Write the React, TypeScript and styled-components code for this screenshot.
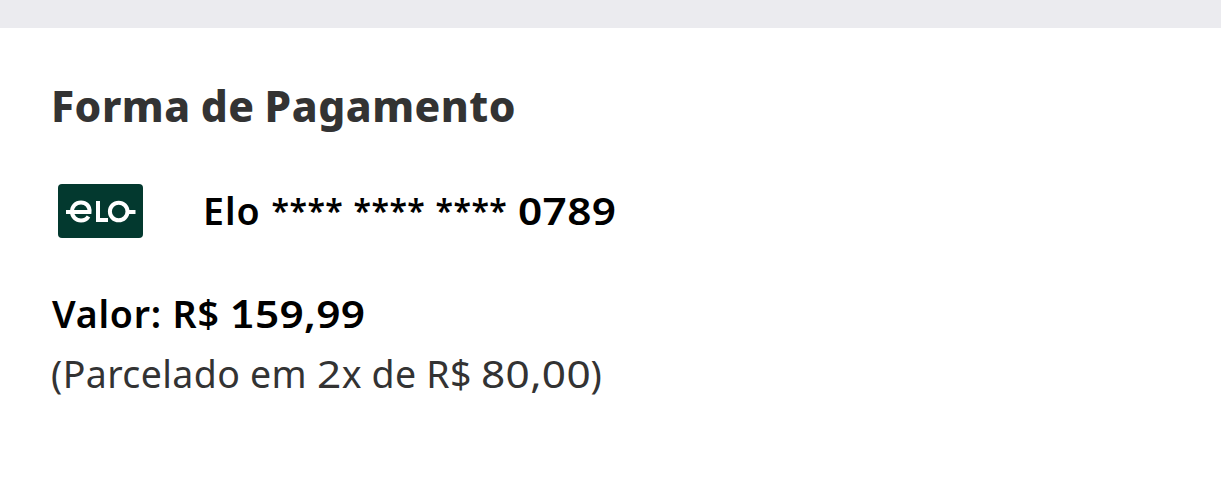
import React from 'react'
import styled, { createGlobalStyle } from 'styled-components'

const GlobalStyle = createGlobalStyle`
  body {
    margin: 0;
    background: #fff;
    font-family: 'Noto Sans', 'Open Sans', sans-serif;
  }
`

const Page = styled.div`
  height: 500px;
  overflow: hidden;
  background: #fff;
`

const Divider = styled.div`
  height: 28px;
  background: #ebebef;
`

const Payment = styled.section`
  display: flex;
  flex-direction: column;
  align-items: flex-start;
  padding: 51px 51px 0;
`

const Title = styled.h2`
  margin: 0;
  font-size: 42.5px;
  font-weight: 850;
  line-height: 54px;
  letter-spacing: 0.5px;
  word-spacing: -1.5px;
  color: #333;
  white-space: nowrap;
`

const CardRow = styled.div`
  display: flex;
  align-items: center;
  height: 54px;
  margin-top: 51px;
  padding-left: 7px;
  gap: 60px;
`

const CardNumber = styled.span`
  font-size: 37.5px;
  font-weight: 650;
  line-height: 54px;
  letter-spacing: 1px;
  white-space: nowrap;
  color: #000;
`

const Mask = styled.span`
  font-size: 32px;
  letter-spacing: 0.5px;
  word-spacing: 1.3px;
  vertical-align: 2px;
`

const Amount = styled.p`
  margin: 46px 0 0;
  padding-left: 1px;
  font-size: 37.5px;
  font-weight: 650;
  line-height: 60px;
  letter-spacing: 0.8px;
  white-space: nowrap;
  color: #000;
`

const Installments = styled.p`
  margin: 0;
  font-size: 37.5px;
  line-height: 60px;
  letter-spacing: 0.4px;
  word-spacing: -0.5px;
  white-space: nowrap;
  color: #333;
`

// Wide numerals, the box keeps the stretched width so the text after it flows on
const Digits = styled.span<{ $width: number }>`
  display: inline-block;
  width: ${p => p.$width}px;
  letter-spacing: 0.3px;
  transform: scaleX(1.13);
  transform-origin: left;
`

// The figure one has a foot serif
const One = styled.span`
  font-family: Lato, sans-serif;
  font-weight: 700;
`

const EloLogo = () => (
  <svg width="85" height="54" viewBox="0 0 85 54" fill="none" aria-label="Elo">
    <rect width="85" height="54" rx="4" fill="#03392f" />
    <g stroke="#fff" strokeWidth="4">
      <path d="M8 28H31.5C32 22 28 18.5 23 18.5C17.5 18.5 14 22.5 14 27.5C14 33 18 36.5 23 36.5C26.5 36.5 29 35 30.5 32.5" />
      <path d="M40 17V36H50" />
      <circle cx="60.7" cy="27.5" r="8.8" />
      <path d="M69.5 28H77.5" />
    </g>
  </svg>
)

export default function App() {
  return (
    <Page>
      <GlobalStyle />
      <Divider />
      <Payment>
        <Title>Forma de Pagamento</Title>
        <CardRow>
          <EloLogo />
          <CardNumber>
            Elo <Mask>**** **** ****</Mask> <Digits $width={98}>0789</Digits>
          </CardNumber>
        </CardRow>
        <Amount>
          Valor: R${' '}
          <Digits $width={133}>
            <One>1</One>59,99
          </Digits>
        </Amount>
        <Installments>
          (Parcelado em <Digits $width={25}>2</Digits>x de R$ <Digits $width={109}>80,00</Digits>)
        </Installments>
      </Payment>
    </Page>
  )
}
